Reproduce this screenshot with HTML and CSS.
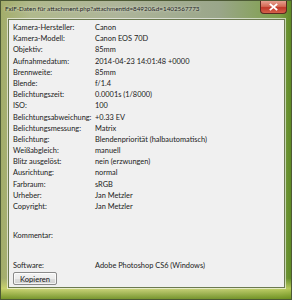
FILE: index.html
```html
<!DOCTYPE html>
<html>
<head>
<meta charset="utf-8">
<link rel="stylesheet" href="styles.css">
</head>
<body>
<div class="window">
  <div class="titlebar">
    <span class="title">FxIF-Daten für attachment.php?attachmentid=84920&amp;d=1402567773</span>
    <div class="close"><svg width="9" height="8" viewBox="0 0 9 8"><path d="M1.5 1.5 L7.5 6.5 M7.5 1.5 L1.5 6.5" stroke="#fff" stroke-width="1.8" stroke-linecap="square"/></svg></div>
  </div>
  <div class="client">
    <div class="rows">
      <span class="k">Kamera-Hersteller:</span><span class="v">Canon</span>
      <span class="k">Kamera-Modell:</span><span class="v">Canon EOS 70D</span>
      <span class="k">Objektiv:</span><span class="v">85mm</span>
      <span class="k">Aufnahmedatum:</span><span class="v">2014-04-23 14:01:48 +0000</span>
      <span class="k">Brennweite:</span><span class="v">85mm</span>
      <span class="k">Blende:</span><span class="v">f/1.4</span>
      <span class="k">Belichtungszeit:</span><span class="v">0.0001s (1/8000)</span>
      <span class="k">ISO:</span><span class="v">100</span>
      <span class="k">Belichtungsabweichung:</span><span class="v">+0.33 EV</span>
      <span class="k">Belichtungsmessung:</span><span class="v">Matrix</span>
      <span class="k">Belichtung:</span><span class="v">Blendenpriorität (halbautomatisch)</span>
      <span class="k">Weißabgleich:</span><span class="v">manuell</span>
      <span class="k">Blitz ausgelöst:</span><span class="v">nein (erzwungen)</span>
      <span class="k">Ausrichtung:</span><span class="v">normal</span>
      <span class="k">Farbraum:</span><span class="v">sRGB</span>
      <span class="k">Urheber:</span><span class="v">Jan Metzler</span>
      <span class="k">Copyright:</span><span class="v">Jan Metzler</span>
    </div>
    <div class="rows comment">
      <span class="k">Kommentar:</span><span class="v"></span>
    </div>
    <div class="rows software">
      <span class="k">Software:</span><span class="v">Adobe Photoshop CS6 (Windows)</span>
    </div>
    <div class="actions"><button class="btn">Kopieren</button></div>
  </div>
</div>
</body>
</html>
```

FILE: styles.css
```css
html, body {
  margin: 0;
  padding: 0;
  background: #fff;
}
.window {
  width: 292px;
  height: 300px;
  box-sizing: border-box;
  display: flex;
  flex-direction: column;
  background:
    linear-gradient(180deg, rgba(255,255,255,0) 0%, rgba(255,255,255,0) 93%, rgba(215,225,110,0.7) 96.5%, rgba(110,145,30,0.85) 100%),
    linear-gradient(90deg, #a3ad6a 0%, #b0b98c 10%, #aeb59a 40%, #9aa68a 75%, #7fa04a 96%, #5f8a25 100%);
  border: 1px solid #4d5a35;
  font-family: Lato, "Liberation Sans", sans-serif;
}
.titlebar {
  height: 18px;
  display: flex;
  align-items: flex-start;
}
.title {
  font-size: 6.3px;
  color: #1e1e1e;
  margin: 4px 0 0 4px;
  white-space: nowrap;
  text-shadow: 0 0 3px rgba(255,255,255,0.9);
}
.close {
  margin-left: auto;
  margin-right: 4px;
  width: 27px;
  height: 13px;
  border: 1px solid #5a2a20;
  border-top: none;
  border-radius: 0 0 4px 4px;
  box-sizing: border-box;
  background: linear-gradient(180deg, #e6a090 0%, #d46a55 45%, #c0392a 55%, #d5614a 100%);
  display: flex;
  align-items: center;
  justify-content: center;
}
.client {
  flex: 1;
  margin: 0 6px 11px 7px;
  background: #f0f0f0;
  border: 1px solid #6c7a50;
  box-shadow: 0 0 0 1px rgba(255,255,255,0.6);
  display: flex;
  flex-direction: column;
  padding: 2px 0 0 4px;
  font-size: 7.4px;
  color: #1a1a1a;
}
.rows {
  display: grid;
  grid-template-columns: 82px auto;
  grid-auto-rows: 11.2px;
  align-items: center;
  line-height: 11.2px;
}
.k, .v {
  white-space: nowrap;
}
.comment {
  margin-top: 18px;
}
.software {
  margin-top: auto;
}
.actions {
  display: flex;
  padding: 1px 0 2px 0;
}
.btn {
  font-family: Lato, "Liberation Sans", sans-serif;
  font-size: 7.6px;
  color: #1a1a1a;
  width: 44px;
  height: 13px;
  padding: 0;
  border: 1px solid #8a8a8a;
  border-radius: 2px;
  background: linear-gradient(180deg, #f4f4f4 0%, #ececec 50%, #dedede 51%, #d2d2d2 100%);
  box-shadow: inset 0 0 0 1px rgba(255,255,255,0.7);
}
```
